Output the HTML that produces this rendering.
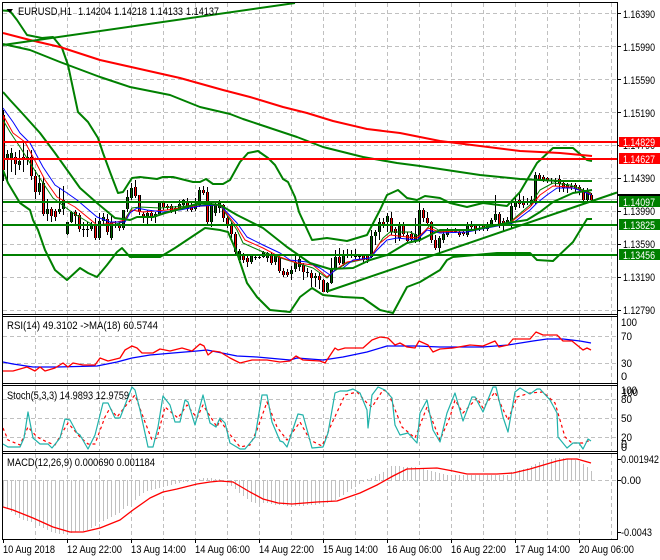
<!DOCTYPE html>
<html><head><meta charset="utf-8"><title>EURUSD,H1</title>
<style>
html,body{margin:0;padding:0;background:#fff;width:660px;height:560px;overflow:hidden}
svg{display:block}
text{font-family:"Liberation Sans",sans-serif;font-size:11px;fill:#000}
.l{fill:none;stroke-linejoin:round}
</style></head><body>
<svg width="660" height="560" viewBox="0 0 660 560" xmlns="http://www.w3.org/2000/svg">
<rect width="660" height="560" fill="#fff"/>
<defs>
<path id="rb" d="M3.5 115V170M15.5 157V164M23.5 157V159M31.5 157V176M35.5 176V192M43.5 183V214M51.5 209V216M55.5 211V217M75.5 212V216M79.5 215V229M95.5 224V238M107.5 219V232M119.5 225V228M135.5 187V196M139.5 195V212M143.5 214V217M151.5 213V217M163.5 203V207M167.5 206V208M171.5 206V211M187.5 201V209M191.5 205V210M203.5 190V193M207.5 192V222M223.5 205V218M227.5 218V225M231.5 225V234M235.5 234V252M243.5 255V260M247.5 258V262M271.5 254V263M279.5 257V271M283.5 271V275M287.5 272V275M303.5 265V272M311.5 273V278M319.5 276V280M323.5 280V292M339.5 257V263M363.5 256V260M367.5 256V260M383.5 222V225M391.5 218V232M395.5 229V233M403.5 226V234M407.5 235V241M411.5 234V239M423.5 210V218M427.5 218V223M431.5 222V240M435.5 240V248M459.5 232V235M463.5 232V234M471.5 225V227M475.5 226V230M483.5 226V229M499.5 214V226M503.5 221V225M519.5 200V204M523.5 201V205M539.5 175V179M543.5 177V180M547.5 178V181M559.5 179V184M563.5 183V188M575.5 185V189M579.5 187V190M583.5 190V200M591.5 195V200"/>
<path id="gb" d="M7.5 154V160M11.5 153V158M19.5 161V165M27.5 157V160M39.5 183V192M47.5 209V214M59.5 209V212M63.5 200V209M67.5 222V234M71.5 212V222M91.5 225V229M99.5 221V238M103.5 217V221M111.5 222V238M123.5 210V228M127.5 197V209M131.5 188V198M147.5 213V217M155.5 214V217M159.5 203V214M175.5 208V211M179.5 204V209M183.5 200V205M195.5 204V209M199.5 190V205M211.5 205V222M215.5 205V213M219.5 203V208M239.5 251V260M251.5 256V262M263.5 252V257M267.5 253V258M275.5 256V262M291.5 270V274M295.5 262V269M299.5 259V267M315.5 276V278M327.5 283V292M331.5 268V283M335.5 257V268M343.5 254V264M371.5 236V257M375.5 232V236M379.5 222V232M387.5 216V222M399.5 225V238M415.5 234V241M419.5 210V240M439.5 238V248M443.5 234V240M447.5 231V235M467.5 226V235M487.5 224V229M491.5 220V224M495.5 214V220M507.5 220V224M511.5 206V221M515.5 202V207M531.5 200V204M535.5 175V202M567.5 185V188M587.5 190V200"/>
</defs>

<!-- grid -->
<g stroke="#c0c0c0" stroke-width="1" stroke-dasharray="4 3" fill="none" shape-rendering="crispEdges">
<path d="M35.5 3V314M67.5 3V314M99.5 3V314M131.5 3V314M163.5 3V314M195.5 3V314M227.5 3V314M259.5 3V314M291.5 3V314M323.5 3V314M355.5 3V314M387.5 3V314M419.5 3V314M451.5 3V314M483.5 3V314M515.5 3V314M547.5 3V314M579.5 3V314M611.5 3V314"/>
<path d="M35.5 317V383M67.5 317V383M99.5 317V383M131.5 317V383M163.5 317V383M195.5 317V383M227.5 317V383M259.5 317V383M291.5 317V383M323.5 317V383M355.5 317V383M387.5 317V383M419.5 317V383M451.5 317V383M483.5 317V383M515.5 317V383M547.5 317V383M579.5 317V383M611.5 317V383"/>
<path d="M35.5 386V451M67.5 386V451M99.5 386V451M131.5 386V451M163.5 386V451M195.5 386V451M227.5 386V451M259.5 386V451M291.5 386V451M323.5 386V451M355.5 386V451M387.5 386V451M419.5 386V451M451.5 386V451M483.5 386V451M515.5 386V451M547.5 386V451M579.5 386V451M611.5 386V451"/>
<path d="M35.5 454V539M67.5 454V539M99.5 454V539M131.5 454V539M163.5 454V539M195.5 454V539M227.5 454V539M259.5 454V539M291.5 454V539M323.5 454V539M355.5 454V539M387.5 454V539M419.5 454V539M451.5 454V539M483.5 454V539M515.5 454V539M547.5 454V539M579.5 454V539M611.5 454V539"/>
<path d="M3 13.5H617M3 46.5H617M3 79.5H617M3 112.5H617M3 145.5H617M3 178.5H617M3 211.5H617M3 244.5H617M3 277.5H617M3 310.5H617M3 336.5H617M3 363.5H617M3 399.5H617M3 418.5H617M3 437.5H617M3 480.5H617"/>
</g>
<path d="M3 199.5H617" stroke="#c0c0c0" stroke-width="1" shape-rendering="crispEdges"/>

<!-- candles -->
<g shape-rendering="crispEdges" fill="none">
<path stroke="#000" stroke-width="1" d="M3.5 110V181M7.5 150V180M11.5 148V172M15.5 152V175M19.5 150V170M23.5 142V172M27.5 150V165M31.5 150V180M35.5 170V199M39.5 175V195M43.5 177V216M47.5 199V221M51.5 207V222M55.5 209V221M59.5 188V214M63.5 186V215M67.5 222V235M71.5 211V223M75.5 210V224M79.5 213V232M83.5 222V237M87.5 222V237M91.5 222V231M95.5 218V240M99.5 213V240M103.5 213V226M107.5 214V235M111.5 216V240M115.5 221V228M119.5 221V231M123.5 210V230M127.5 190V212M131.5 183V200M135.5 180V198M139.5 195V215M143.5 212V223M147.5 210V224M151.5 210V221M155.5 212V223M159.5 202V215M163.5 201V210M167.5 204V210M171.5 204V213M175.5 206V214M179.5 200V210M183.5 199V207M187.5 198V211M191.5 202V212M195.5 198V211M199.5 187V207M203.5 186V195M207.5 187V225M211.5 203V227M215.5 203V216M219.5 200V213M223.5 204V222M227.5 216V228M231.5 222V238M235.5 232V254M239.5 249V263M243.5 253V263M247.5 254V267M251.5 254V264M255.5 255V260M259.5 255V259M263.5 251V258M267.5 252V262M271.5 252V265M275.5 254V265M279.5 256V273M283.5 268V277M287.5 269V277M291.5 266V280M295.5 256V272M299.5 256V271M303.5 263V280M307.5 268V277M311.5 270V287M315.5 273V287M319.5 273V289M323.5 279V292M327.5 282V293M331.5 258V284M335.5 250V270M339.5 248V265M343.5 250V266M347.5 249V258M351.5 250V258M355.5 249V259M359.5 254V260M363.5 255V263M367.5 254V263M371.5 230V258M375.5 230V245M379.5 218V240M383.5 218V228M387.5 213V232M391.5 212V235M395.5 227V243M399.5 222V241M403.5 222V236M407.5 232V243M411.5 231V243M415.5 218V243M419.5 203V242M423.5 208V222M427.5 212V226M431.5 221V243M435.5 235V250M439.5 236V255M443.5 231V243M447.5 228V237M451.5 229V233M455.5 228V233M459.5 230V237M463.5 230V236M467.5 222V237M471.5 221V229M475.5 224V234M479.5 226V231M483.5 224V231M487.5 222V231M491.5 218V227M495.5 195V222M499.5 212V228M503.5 218V232M507.5 217V225M511.5 200V228M515.5 197V210M519.5 192V208M523.5 196V208M527.5 198V205M531.5 196V206M535.5 172V204M539.5 173V181M543.5 175V182M547.5 177V183M551.5 178V184M555.5 178V186M559.5 175V192M563.5 182V192M567.5 183V193M571.5 183V190M575.5 183V193M579.5 185V195M583.5 188V202M587.5 188V203M591.5 193V201"/>
<path stroke="#000" stroke-width="1" d="M82 229.5h3M86 229.5h3M114 224.5h3M254 257.5h3M258 257.5h3M306 272.5h3M346 255.5h3M350 255.5h3M354 256.5h3M358 256.5h3M450 231.5h3M454 231.5h3M478 228.5h3M526 201.5h3M550 180.5h3M554 181.5h3M570 186.5h3"/>
<use href="#rb" stroke="#000" stroke-width="3"/>
<use href="#gb" stroke="#000" stroke-width="3"/>
<use href="#rb" stroke="#ff0000" stroke-width="1"/>
<use href="#gb" stroke="#006400" stroke-width="1"/>
</g>

<!-- EMAs -->
<g class="l" fill="none" stroke-width="1">
<path stroke="#008000" d="M3 120L10 132L20 147L30 163L43 183L53 198L73 213L93 225L113 225L123 222L132 208L140 207L160 208L200 205L220 205L237 230L243 243L263 252L287 260L313 268L327 278L333 272L347 263L370 258L383 238L390 232L410 232L420 237L430 225L440 231L473 230L510 222L530 205L540 190L553 183L570 185L583 190L591 193"/>
<path stroke="#ff0000" d="M3 115L13 133L25 142L33 157L45 180L57 197L75 207L97 225L113 223L125 220L132 210L143 212L167 210L187 207L220 205L237 227L245 240L263 248L280 257L297 263L313 265L327 277L335 270L347 262L370 258L380 243L390 235L407 237L417 238L428 228L440 232L473 230L510 223L530 207L540 195L553 186L570 187L583 191L591 194"/>
<path stroke="#0000ff" d="M3 108L13 122L20 133L30 143L43 167L55 185L67 193L77 200L97 217L110 222L125 222L130 213L137 208L147 210L163 212L180 210L200 206L220 205L237 223L247 237L263 245L280 253L290 260L307 262L320 268L330 275L337 268L343 268L353 260L370 258L377 250L387 240L397 238L417 240L427 230L440 233L467 232L487 228L513 223L530 210L537 203L547 195L557 188L573 188L587 193L591 195"/>
</g>

<!-- bands and MAs -->
<g class="l" fill="none" stroke-width="2">
<path stroke="#008000" d="M3 10.5L10 11L17 20L27 35L42 38L53 37L62 48L68 65L78 112L88 122L98 138L103 153L110 172L118 193L123 192L132 178L140 177L157 179L163 177L173 177L193 182L200 182L206 179L213 184L223 184L230 180L240 162L248 153L258 151L268 158L275 165L283 179L288 182L295 197L299 212L312 240L327 238L347 241L367 235L380 210L387 195L398 190L407 198L417 200L425 196L440 198L450 203L467 207L483 203L507 206L520 192L537 163L553 148L573 148L587 160L592 161"/>
<path stroke="#008000" d="M3 92L10 100L22 113L40 133L55 153L80 188L97 203L115 218L130 220L137 217L153 217L165 213L180 209L200 203L220 205L237 215L263 228L287 247L310 263L330 269L353 268L370 260L387 255L407 243L420 240L440 230L473 230L507 223L527 220L540 212L553 202L573 193L592 190"/>
<path stroke="#008000" d="M3 170L8 183L20 203L30 210L33 220L38 230L45 250L55 270L67 280L80 268L88 273L97 277L107 265L117 252L122 248L130 257L160 257L175 248L190 238L205 228L220 230L228 232L237 253L247 283L257 297L270 310L290 312L300 297L312 288L323 295L343 297L363 298L380 310L393 313L407 287L420 282L440 270L447 260L453 257L497 253L530 253L537 260L553 261L573 242L587 219L592 219"/>
<path stroke="#008000" d="M3 44L30 50L60 62L100 77L130 87L170 95L200 107L230 114L243 119L267 127L297 137L323 147L363 157L397 163L420 166L440 169L480 175L520 179L560 181L592 181"/>
<path stroke="#ff0000" d="M3 33L30 40L60 47L100 60L140 69L180 78L223 90L250 97L283 107L307 113L333 121L367 129L400 133L420 137L440 141L480 146L520 151L560 153L592 156"/>
<path stroke="#008000" d="M3 45L295 3"/>
<path stroke="#008000" d="M327 291.5L617 192.5"/>
</g>
<g stroke-width="2" shape-rendering="crispEdges">
<path stroke="#ff0000" d="M3 142H617M3 159H617"/>
<path stroke="#008000" d="M3 202H617M3 225H617M3 255H617"/>
</g>
<path d="M6.5 9H13L9.8 13Z" fill="#000"/>

<!-- RSI -->
<g class="l" fill="none" stroke-width="1.3">
<path stroke="#0000ff" d="M3 362L13 364L33 367L57 367L97 366L117 362L132 358L150 355L173 353L197 351L207 350L237 356L257 357L290 360L297 358L323 360L343 357L367 352L387 346L417 346L440 347L483 347L508 345L533 341L547 339L563 339L580 341L591 343"/>
<path stroke="#ff0000" d="M3 371L13 371L27 367L35 371L40 367L45 371L55 368L63 363L68 367L73 363L83 365L95 365L100 358L108 361L120 358L125 350L132 346L137 348L142 353L153 353L160 349L170 351L182 348L192 351L200 344L204 346L208 355L213 351L220 352L230 358L240 363L252 360L267 360L280 362L290 361L296 356L303 360L320 361L325 363L335 348L338 350L345 348L363 348L372 340L380 337L388 338L395 345L400 343L407 347L415 348L419 341L428 345L433 352L440 349L453 348L470 345L483 346L495 341L499 347L508 345L513 339L530 339L536 332L543 335L557 335L563 341L572 341L583 350L587 348L591 350"/>
</g>

<!-- Stoch -->
<g class="l" fill="none" stroke-width="1.2">
<path stroke="#ff0000" stroke-dasharray="3 3" d="M3 428L8 440L20 445L28 427L37 437L47 442L55 445L62 433L68 423L80 437L88 444L95 444L105 417L110 408L117 417L128 403L135 395L145 422L152 440L157 438L165 407L178 418L187 405L197 418L203 405L217 427L220 420L228 432L240 447L250 445L257 430L267 402L277 427L287 440L300 422L310 440L322 446L332 423L345 395L357 392L367 403L372 407L383 390L388 392L402 427L415 438L427 407L440 440L450 417L455 400L463 413L477 398L483 408L495 392L508 420L517 397L530 393L543 392L555 403L565 437L572 443L583 443L591 440"/>
<path stroke="#20b2aa" d="M3 444L8 447L20 447L24 438L28 412L33 438L40 444L48 444L52 448L60 438L65 419L70 420L77 433L80 435L88 449L95 435L103 403L108 403L115 418L120 418L127 400L132 387L135 390L140 410L148 447L153 447L158 427L163 396L170 405L175 422L180 422L185 400L188 402L195 425L203 395L210 423L216 427L220 418L225 423L230 443L240 449L245 449L255 437L262 395L267 395L272 422L280 441L283 442L287 447L298 414L303 415L312 448L323 447L328 433L335 393L340 391L347 391L353 389L360 393L367 410L368 428L372 395L378 387L385 390L392 398L395 425L400 435L408 433L417 443L420 413L427 400L433 430L440 442L447 413L455 393L463 421L472 397L475 397L483 412L493 387L496 387L503 417L508 432L515 392L520 388L530 394L537 389L540 389L550 400L557 413L558 437L567 448L573 443L579 443L583 449L588 439L591 441"/>
</g>

<!-- MACD -->
<path fill="none" stroke="#c0c0c0" stroke-width="1" shape-rendering="crispEdges" d="M3.5 480V507M7.5 480V509M11.5 480V512M15.5 480V515M19.5 480V518M23.5 480V520M27.5 480V521M31.5 480V522M35.5 480V524M39.5 480V526M43.5 480V528M47.5 480V530M51.5 480V532M55.5 480V533M59.5 480V534M63.5 480V534M67.5 480V534M71.5 480V533M75.5 480V532M79.5 480V531M83.5 480V531M87.5 480V530M91.5 480V528M95.5 480V526M99.5 480V522M103.5 480V521M107.5 480V519M111.5 480V517M115.5 480V515M119.5 480V513M123.5 480V509M127.5 480V506M131.5 480V504M135.5 480V500M139.5 480V496M143.5 480V493M147.5 480V491M151.5 480V490M155.5 480V489M159.5 480V488M163.5 480V487M167.5 480V486M171.5 480V485M175.5 480V484M179.5 480V483M183.5 480V482M187.5 480V482M191.5 480V481M195.5 480V481M199.5 479V481M203.5 478V481M207.5 478V481M211.5 478V481M215.5 479V481M219.5 479V481M223.5 480V481M227.5 480V483M231.5 480V486M235.5 480V489M239.5 480V493M243.5 480V496M247.5 480V499M251.5 480V502M255.5 480V503M259.5 480V503M263.5 480V503M267.5 480V503M271.5 480V504M275.5 480V505M279.5 480V505M283.5 480V505M287.5 480V506M291.5 480V506M295.5 480V506M299.5 480V506M303.5 480V506M307.5 480V505M311.5 480V505M315.5 480V505M319.5 480V504M323.5 480V504M327.5 480V503M331.5 480V502M335.5 480V500M339.5 480V497M343.5 480V495M347.5 480V492M351.5 480V489M355.5 480V487M359.5 480V484M363.5 480V482M367.5 479V481M371.5 478V481M375.5 476V481M379.5 474V481M383.5 472V481M387.5 468V481M391.5 466V481M395.5 466V481M399.5 466V481M403.5 467V481M407.5 467V481M411.5 467V481M415.5 467V481M419.5 468V481M423.5 469V481M427.5 470V481M431.5 471V481M435.5 472V481M439.5 473V481M443.5 474V481M447.5 475V481M451.5 475V481M455.5 475V481M459.5 475V481M463.5 475V481M467.5 475V481M471.5 475V481M475.5 475V481M479.5 475V481M483.5 475V481M487.5 475V481M491.5 475V481M495.5 475V481M499.5 475V481M503.5 475V481M507.5 475V481M511.5 472V481M515.5 471V481M519.5 470V481M523.5 469V481M527.5 468V481M531.5 466V481M535.5 464V481M539.5 462V481M543.5 460V481M547.5 459V481M551.5 459V481M555.5 458V481M559.5 458V481M563.5 458V481M567.5 459V481M571.5 459V481M575.5 460V481M579.5 461V481M583.5 464V481M587.5 467V481M591.5 471V481"/>
<path class="l" fill="none" stroke="#ff0000" stroke-width="1.3" d="M3 507L13 510L33 518L53 527L70 532L83 532L100 528L120 520L133 510L150 498L163 492L177 489L197 484L210 482L220 481L233 482L250 492L263 499L278 503L292 504L317 502L337 501L360 493L377 485L393 476L407 469L437 468L453 471L467 474L497 474L513 473L530 469L557 461L567 459L577 459L591 463"/>

<!-- frames -->
<g fill="none" stroke="#000" stroke-width="1" shape-rendering="crispEdges">
<path d="M2.5 2.5H617.5V539.5H2.5Z"/>
<path d="M2 314.5H618M2 316.5H618M2 383.5H618M2 385.5H618M2 451.5H618M2 453.5H618"/>
<path d="M618 13.5h3M618 46.5h3M618 79.5h3M618 112.5h3M618 145.5h3M618 178.5h3M618 211.5h3M618 244.5h3M618 277.5h3M618 310.5h3M618 480.5h3M618 532.5h3M618 459.5h3"/>
<path d="M3.5 540v3M67.5 540v3M131.5 540v3M195.5 540v3M259.5 540v3M323.5 540v3M387.5 540v3M451.5 540v3M515.5 540v3M579.5 540v3"/>
</g>

<!-- header text -->
<text x="18" y="15" textLength="54" lengthAdjust="spacingAndGlyphs">EURUSD,H1</text>
<text x="78" y="15" textLength="33" lengthAdjust="spacingAndGlyphs">1.14204</text>
<text x="114" y="15" textLength="33" lengthAdjust="spacingAndGlyphs">1.14218</text>
<text x="150" y="15" textLength="33" lengthAdjust="spacingAndGlyphs">1.14133</text>
<text x="186" y="15" textLength="33" lengthAdjust="spacingAndGlyphs">1.14137</text>
<text x="7" y="329" textLength="151" lengthAdjust="spacingAndGlyphs">RSI(14) 49.3102  -&gt;MA(18) 60.5744</text>
<text x="7" y="399" textLength="122" lengthAdjust="spacingAndGlyphs">Stoch(5,3,3) 14.9893 12.9759</text>
<text x="7" y="466" textLength="148" lengthAdjust="spacingAndGlyphs">MACD(12,26,9) 0.000690 0.001184</text>

<!-- right axis -->
<g>
<text x="623" y="18" textLength="32" lengthAdjust="spacingAndGlyphs">1.16390</text>
<text x="623" y="51" textLength="32" lengthAdjust="spacingAndGlyphs">1.15990</text>
<text x="623" y="84" textLength="32" lengthAdjust="spacingAndGlyphs">1.15590</text>
<text x="623" y="117" textLength="32" lengthAdjust="spacingAndGlyphs">1.15190</text>
<text x="623" y="149" textLength="32" lengthAdjust="spacingAndGlyphs">1.14790</text>
<text x="623" y="182" textLength="32" lengthAdjust="spacingAndGlyphs">1.14390</text>
<text x="623" y="215" textLength="32" lengthAdjust="spacingAndGlyphs">1.13990</text>
<text x="623" y="248" textLength="32" lengthAdjust="spacingAndGlyphs">1.13590</text>
<text x="623" y="281" textLength="32" lengthAdjust="spacingAndGlyphs">1.13190</text>
<text x="623" y="314" textLength="32" lengthAdjust="spacingAndGlyphs">1.12790</text>
<text x="621" y="326" textLength="16" lengthAdjust="spacingAndGlyphs">100</text>
<text x="621" y="340" textLength="11" lengthAdjust="spacingAndGlyphs">70</text>
<text x="621" y="367" textLength="11" lengthAdjust="spacingAndGlyphs">30</text>
<text x="621" y="380">0</text>
<text x="621" y="394" textLength="16" lengthAdjust="spacingAndGlyphs">100</text>
<text x="622" y="396" textLength="16" lengthAdjust="spacingAndGlyphs">100</text>
<text x="621" y="403" textLength="11" lengthAdjust="spacingAndGlyphs">80</text>
<text x="621" y="422" textLength="11" lengthAdjust="spacingAndGlyphs">50</text>
<text x="621" y="441" textLength="11" lengthAdjust="spacingAndGlyphs">20</text>
<text x="621" y="448">0</text>
<text x="621" y="451">0</text>
<text x="621" y="463" textLength="38" lengthAdjust="spacingAndGlyphs">0.001942</text>
<text x="621" y="484" textLength="20" lengthAdjust="spacingAndGlyphs">0.00</text>
<text x="621" y="536" textLength="31" lengthAdjust="spacingAndGlyphs">-0.0043</text>
</g>

<!-- tags -->
<g shape-rendering="crispEdges">
<rect x="618" y="194" width="42" height="2" fill="#000"/>
<rect x="619" y="137" width="41" height="10" fill="#ff0000"/>
<rect x="619" y="153" width="41" height="11" fill="#ff0000"/>
<rect x="619" y="196" width="41" height="11" fill="#008000"/>
<rect x="619" y="219" width="41" height="11" fill="#008000"/>
<rect x="619" y="249" width="41" height="11" fill="#008000"/>
</g>
<g>
<text x="623" y="146" textLength="32" lengthAdjust="spacingAndGlyphs" style="fill:#fff">1.14829</text>
<text x="623" y="163" textLength="32" lengthAdjust="spacingAndGlyphs" style="fill:#fff">1.14627</text>
<text x="623" y="206" textLength="32" lengthAdjust="spacingAndGlyphs" style="fill:#fff">1.14097</text>
<text x="623" y="229" textLength="32" lengthAdjust="spacingAndGlyphs" style="fill:#fff">1.13825</text>
<text x="623" y="259" textLength="32" lengthAdjust="spacingAndGlyphs" style="fill:#fff">1.13456</text>
</g>

<!-- time axis -->
<text x="3" y="553" textLength="52" lengthAdjust="spacingAndGlyphs">10 Aug 2018</text>
<text x="67" y="553" textLength="55" lengthAdjust="spacingAndGlyphs">12 Aug 22:00</text>
<text x="131" y="553" textLength="55" lengthAdjust="spacingAndGlyphs">13 Aug 14:00</text>
<text x="195" y="553" textLength="55" lengthAdjust="spacingAndGlyphs">14 Aug 06:00</text>
<text x="259" y="553" textLength="55" lengthAdjust="spacingAndGlyphs">14 Aug 22:00</text>
<text x="323" y="553" textLength="55" lengthAdjust="spacingAndGlyphs">15 Aug 14:00</text>
<text x="387" y="553" textLength="55" lengthAdjust="spacingAndGlyphs">16 Aug 06:00</text>
<text x="451" y="553" textLength="55" lengthAdjust="spacingAndGlyphs">16 Aug 22:00</text>
<text x="515" y="553" textLength="55" lengthAdjust="spacingAndGlyphs">17 Aug 14:00</text>
<text x="579" y="553" textLength="55" lengthAdjust="spacingAndGlyphs">20 Aug 06:00</text>
</svg>
</body></html>
